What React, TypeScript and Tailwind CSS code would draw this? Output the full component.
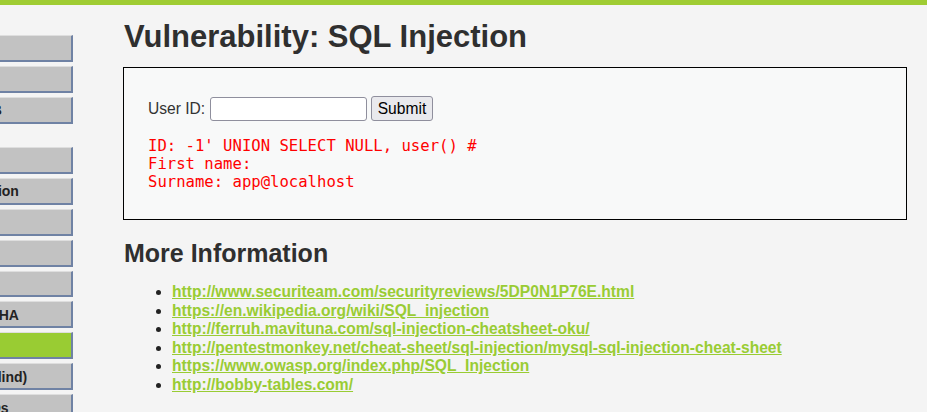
import React from 'react';

const menuGroups: string[][] = [
    ['Home', 'Instructions', 'Setup / Reset DB'],
    [
        'Brute Force',
        'Command Injection',
        'CSRF',
        'File Inclusion',
        'File Upload',
        'Insecure CAPTCHA',
        'SQL Injection',
        'SQL Injection (Blind)',
        'Weak Session IDs',
        'XSS (DOM)',
        'XSS (Reflected)',
    ],
];

const links = [
    'http://www.securiteam.com/securityreviews/5DP0N1P76E.html',
    'https://en.wikipedia.org/wiki/SQL_injection',
    'http://ferruh.mavituna.com/sql-injection-cheatsheet-oku/',
    'http://pentestmonkey.net/cheat-sheet/sql-injection/mysql-sql-injection-cheat-sheet',
    'https://www.owasp.org/index.php/SQL_Injection',
    'http://bobby-tables.com/',
];

function MenuButton({ label, active }: { label: string; active?: boolean }) {
    return (
        <li
            className={`h-[26.9px] flex items-center pl-[9px] pt-[2px] whitespace-nowrap font-bold text-[14px] text-[#222] border-t border-t-[#dedede] border-r-2 border-b-2 border-r-[#6f82a4] border-b-[#6f82a4] ${active ? 'bg-[#99cc33]' : 'bg-[#c2c2c2]'}`}
        >
            {label}
        </li>
    );
}

export default function App() {
    return (
        <div className="min-h-[412px] bg-[#f4f4f4] overflow-hidden font-['Liberation_Sans',Arial,sans-serif] text-[#333]">
            <div className="h-[5px] bg-[#9fcc33]" />
            <div className="flex">
                <aside className="w-[193px] shrink-0 -ml-[120px] pt-[30px]">
                    {menuGroups.map((group, gi) => (
                        <ul key={gi} className="flex flex-col gap-[4px] mb-[23.3px]">
                            {group.map(item => (
                                <MenuButton key={item} label={item} active={item === 'SQL Injection'} />
                            ))}
                        </ul>
                    ))}
                </aside>

                <main className="ml-[50px] flex-1 mr-[20px] min-w-0">
                    <h1 className="mt-[14px] text-[31px] leading-[36px] font-bold text-[#2f2f2f] pl-[1px]">
                        Vulnerability: SQL Injection
                    </h1>

                    <div className="mt-[12px] h-[153px] border border-black bg-[#f8f9f9] pl-[24px] pt-[28px]">
                        <form className="flex items-center h-[25px] text-[15.6px] text-[#333]" onSubmit={e => e.preventDefault()}>
                            <label className="mr-[4.5px]">User ID:</label>
                            <input
                                type="text"
                                className="w-[157px] h-[24px] bg-white border border-[#8f8f9d] rounded-[3px] px-1"
                            />
                            <button
                                type="submit"
                                className="ml-[4px] h-[25px] px-[6px] bg-[#e9e9ed] border border-[#8f8f9d] rounded-[3px] text-[15.6px] text-black"
                            >
                                Submit
                            </button>
                        </form>
                        <pre className="mt-[16px] text-[15.6px] leading-[18px] text-[#ff0000] font-['DejaVu_Sans_Mono',monospace]">
{`ID: -1' UNION SELECT NULL, user() #
First name: 
Surname: app@localhost`}
                        </pre>
                    </div>

                    <h2 className="mt-[18px] text-[25px] leading-[30px] font-bold text-[#2f2f2f] pl-[1px]">
                        More Information
                    </h2>

                    <ul className="mt-[15px] list-disc pl-[49px] text-[15.6px] leading-[18.6px] font-bold">
                        {links.map(link => (
                            <li key={link} className="marker:text-[#222]">
                                <a href="#" className="text-[#99cc33] underline">
                                    {link}
                                </a>
                            </li>
                        ))}
                    </ul>
                </main>
            </div>
        </div>
    );
}
